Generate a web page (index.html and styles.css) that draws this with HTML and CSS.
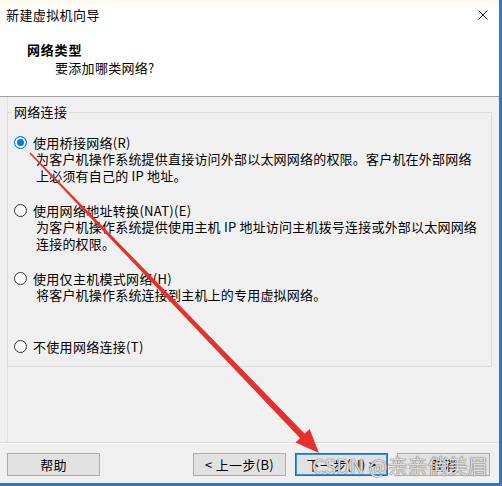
FILE: index.html
```html
<!DOCTYPE html>
<html lang="zh-CN">

<head>
    <meta charset="UTF-8">
    <meta name="viewport" content="width=device-width, initial-scale=1.0">
    <title>新建虚拟机向导</title>
    <link rel="stylesheet" href="styles.css">
</head>

<body>
    <div class="window">
        <!-- 标题栏 -->
        <div class="titlebar">
            <span class="title">新建虚拟机向导</span>
            <svg class="close" width="10" height="10" viewBox="0 0 10 10">
                <path d="M0.5 0.5 L9.5 9.5 M9.5 0.5 L0.5 9.5" stroke="#222" stroke-width="1" fill="none" />
            </svg>
        </div>

        <!-- 头部说明 -->
        <div class="header">
            <h1>网络类型</h1>
            <p>要添加哪类网络?</p>
        </div>

        <!-- 网络连接选项 -->
        <div class="content">
            <fieldset class="group">
                <legend>网络连接</legend>

                <div class="option">
                    <div class="choice"><span class="radio checked"></span>使用桥接网络(R)</div>
                    <p class="desc">为客户机操作系统提供直接访问外部以太网网络的权限。客户机在外部网络<br>上必须有自己的 IP 地址。</p>
                </div>

                <div class="option">
                    <div class="choice"><span class="radio"></span>使用网络地址转换(NAT)(E)</div>
                    <p class="desc">为客户机操作系统提供使用主机 IP 地址访问主机拨号连接或外部以太网网络<br>连接的权限。</p>
                </div>

                <div class="option">
                    <div class="choice"><span class="radio"></span>使用仅主机模式网络(H)</div>
                    <p class="desc">将客户机操作系统连接到主机上的专用虚拟网络。</p>
                </div>

                <div class="option last">
                    <div class="choice"><span class="radio"></span>不使用网络连接(T)</div>
                </div>
            </fieldset>
        </div>

        <!-- 底部按钮 -->
        <div class="footer">
            <button class="btn">帮助</button>
            <div class="nav">
                <button class="btn">&lt; 上一步(B)</button>
                <button class="btn primary">下一步(N) &gt;</button>
                <button class="btn">取消</button>
            </div>
        </div>

        <!-- 红色箭头标注 -->
        <svg class="arrow" width="502" height="486" viewBox="0 0 502 486">
            <polygon points="30.6,152.4 305,434 300.4,438.4 29.4,153.6" fill="#e6302b" />
            <polygon points="319,453 295.5,442.6 309.6,429.1" fill="#e6302b" />
        </svg>

        <div class="watermark">CSDN @亲亲俏美眉</div>
    </div>
</body>

</html>
```

FILE: styles.css
```css
* {
    margin: 0;
    padding: 0;
    box-sizing: border-box;
}

body {
    font-family: "Noto Sans CJK SC", "Noto Sans", sans-serif;
    font-size: 13px;
    color: #000;
    background: #fff;
}

.window {
    position: relative;
    width: 502px;
    height: 486px;
    display: flex;
    flex-direction: column;
    background: #f0f0f0;
    border-right: 3px solid #2b79c9;
    border-bottom: 3px solid #2b79c9;
    overflow: hidden;
}

.titlebar {
    height: 30px;
    display: flex;
    align-items: center;
    justify-content: space-between;
    padding: 0 11px 0 6px;
    background: linear-gradient(#fcf9ee, #fff 10px);
    line-height: 18px;
}

.title {
    letter-spacing: 0.4px;
}

.close {
    display: block;
    margin-top: -1px;
}

.header {
    height: 67px;
    background: #fff;
    border-bottom: 1px solid #a0a0a0;
    padding-top: 11px;
}

.header h1 {
    font-size: 13px;
    font-weight: bold;
    line-height: 18px;
    padding-left: 27px;
    letter-spacing: 0.8px;
}

.header p {
    line-height: 18px;
    padding-left: 55px;
    letter-spacing: 0.3px;
}

.content {
    flex: 1;
    margin-left: 7px;
    padding: 6px 7px 0 0;
    border-left: 1px solid #e2e2e2;
}

.group {
    margin-left: -1px;
    border: 1px solid #dcdcdc;
    padding: 14px 0 12px 6px;
}

.group legend {
    line-height: 18px;
    padding: 0 2px;
    margin-left: -2px;
    letter-spacing: 0.3px;
}

.option {
    margin-bottom: 19px;
}

.option.last {
    margin-bottom: 0;
}

.choice {
    display: flex;
    align-items: center;
    height: 15px;
    line-height: 15px;
    letter-spacing: 0.3px;
    white-space: nowrap;
}

.radio {
    width: 13px;
    height: 13px;
    border-radius: 50%;
    border: 1px solid #333;
    background: #fff;
    margin-right: 6px;
    flex-shrink: 0;
}

.radio.checked {
    border-color: #0078d7;
    background: #0078d7;
    box-shadow: inset 0 0 0 2px #fff;
}

.desc {
    margin-left: 22px;
    line-height: 17px;
    min-height: 34px;
    white-space: nowrap;
    letter-spacing: 0.2px;
}

.footer {
    height: 41px;
    display: flex;
    justify-content: space-between;
    padding: 10px 9px 0 7px;
    border-top: 1px solid #d9d9d9;
    box-shadow: inset 0 1px #fafafa;
}

.nav {
    display: flex;
    gap: 9px;
}

.btn {
    width: 93px;
    height: 23px;
    font-family: inherit;
    font-size: 13px;
    color: #000;
    background: #e1e1e1;
    border: 1px solid #adadad;
    letter-spacing: 0.3px;
}

.btn.primary {
    border-color: #0078d7;
    box-shadow: inset 0 0 0 1px #3a94e0;
}

.arrow {
    position: absolute;
    left: 0;
    top: 0;
    pointer-events: none;
}

.watermark {
    position: absolute;
    left: 312px;
    top: 454px;
    font-size: 20px;
    line-height: 24px;
    color: rgba(235, 235, 235, .9);
    text-shadow: 0 0 1px #666, 0 0 1px #666;
    white-space: nowrap;
    pointer-events: none;
}
```
